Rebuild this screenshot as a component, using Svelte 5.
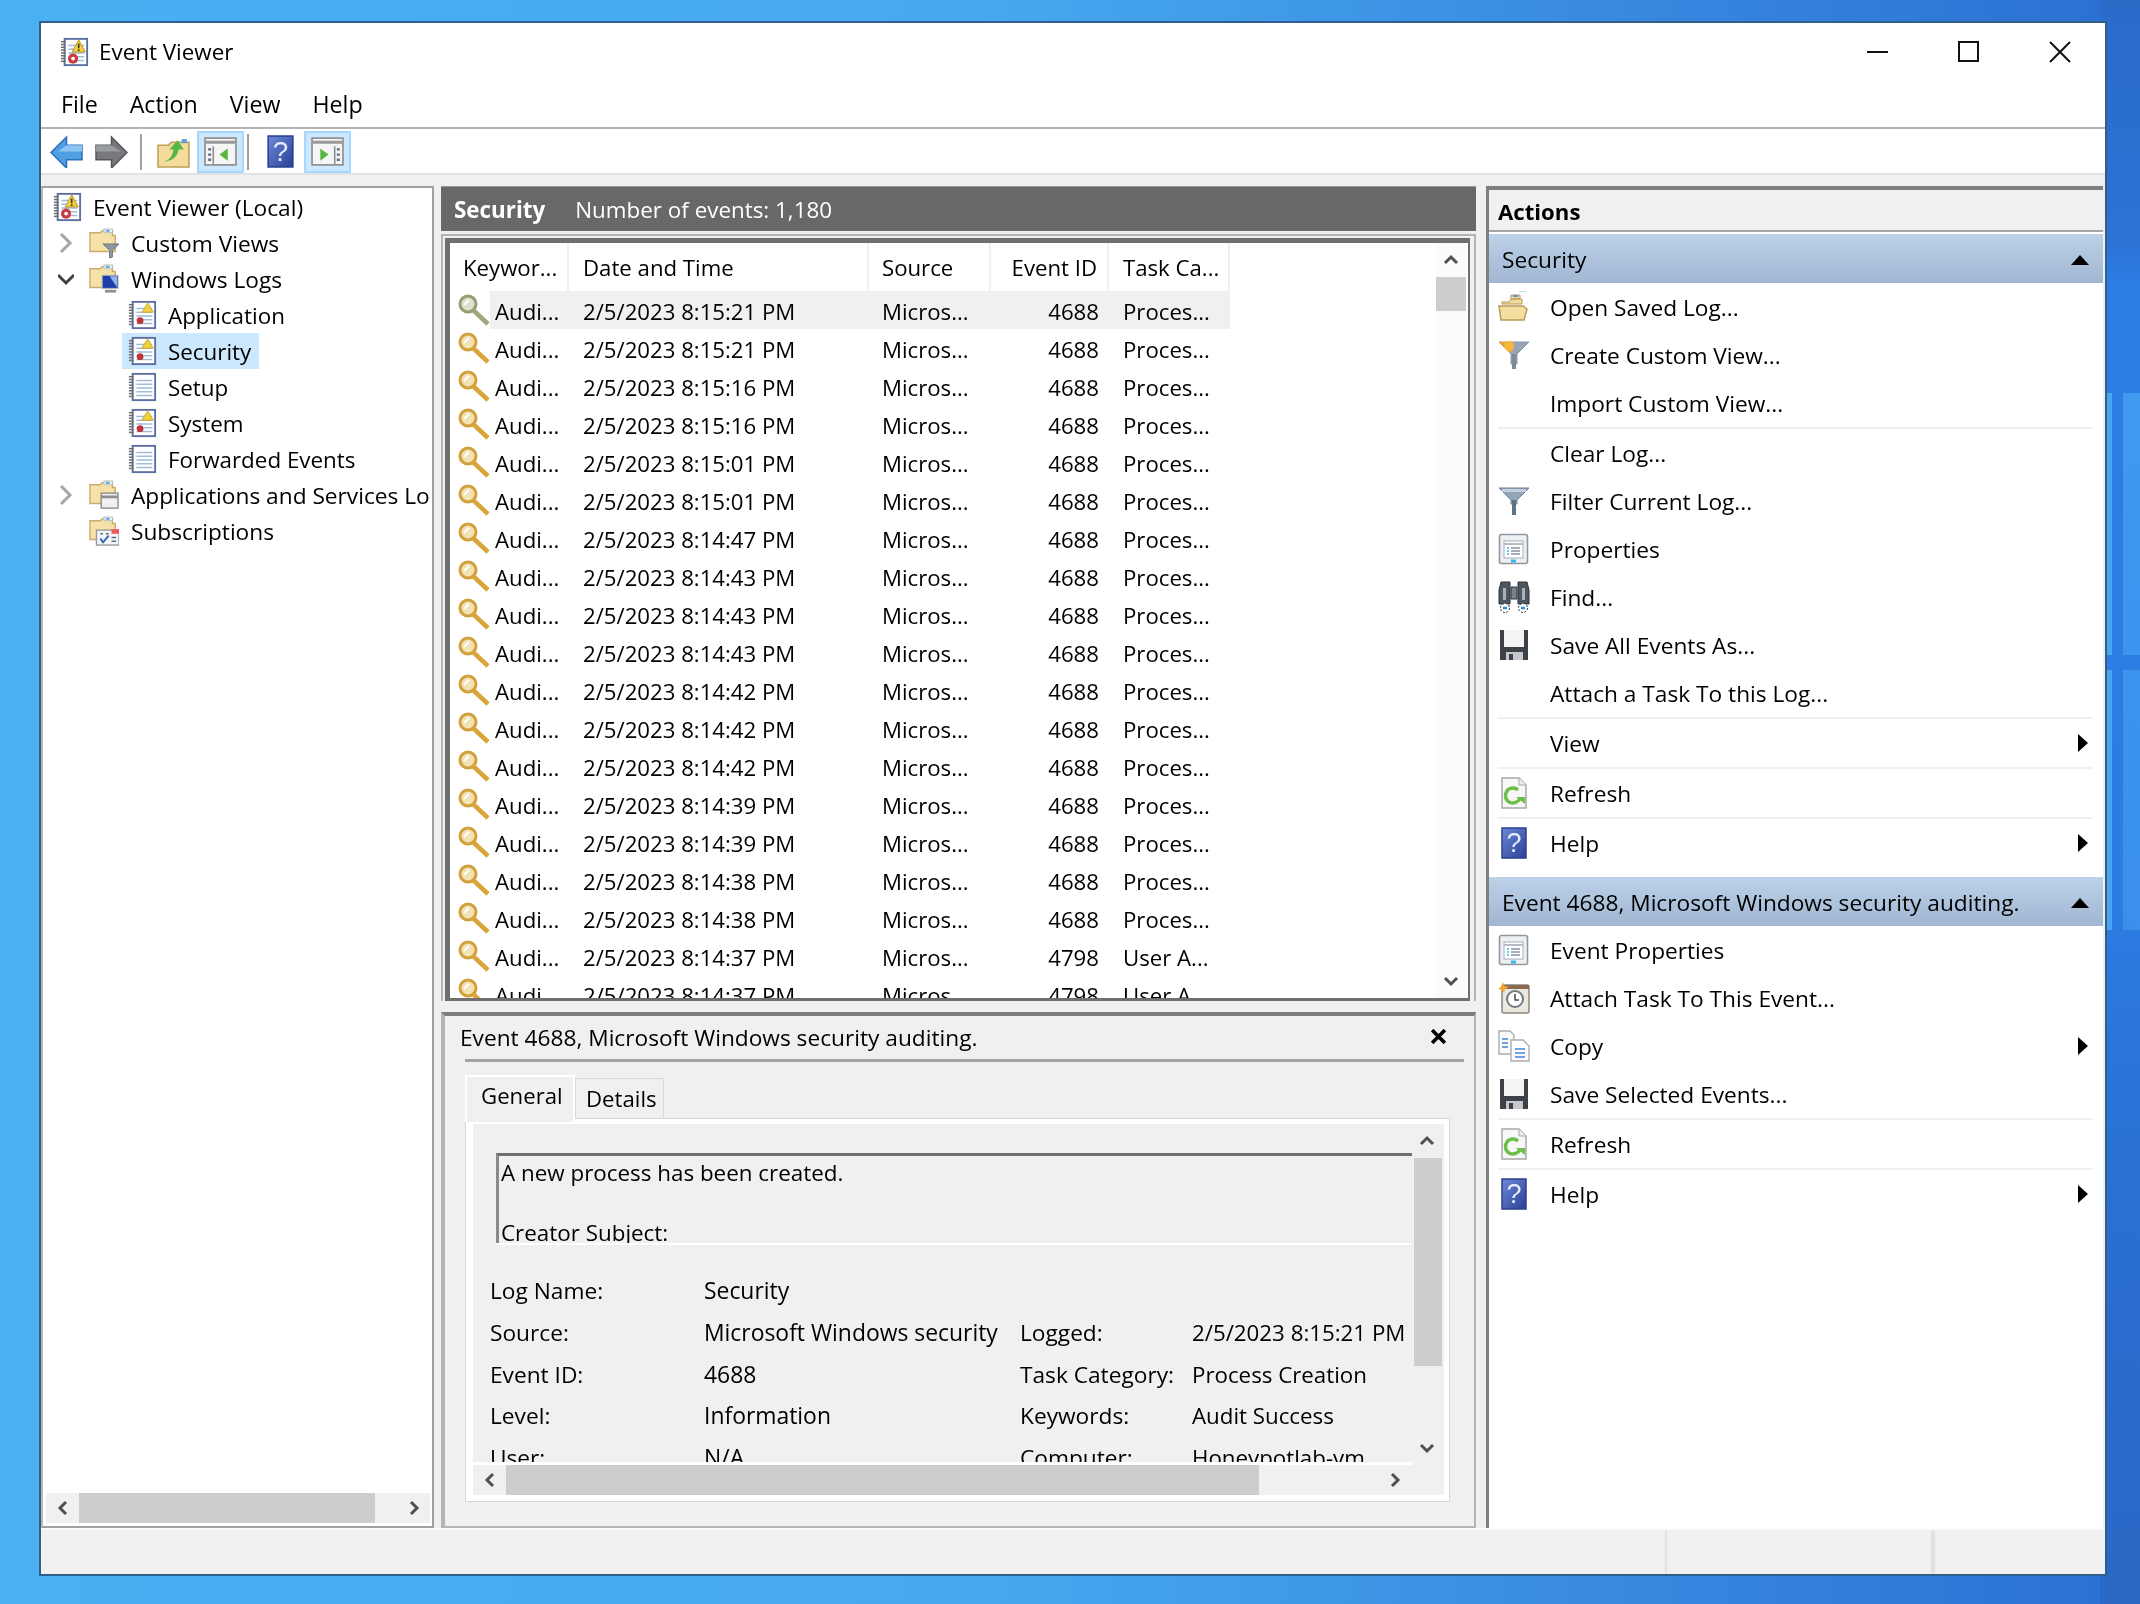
<script>
  // Event Viewer window, security log selected
  const tree = [
    { label: 'Event Viewer (Local)', level: 0, icon: 'logMain' },
    { label: 'Custom Views', level: 1, chev: 'closed', icon: 'folderFilter' },
    { label: 'Windows Logs', level: 1, chev: 'open', icon: 'folderMonitor' },
    { label: 'Application', level: 2, icon: 'logWarn' },
    { label: 'Security', level: 2, icon: 'logWarn', selected: true },
    { label: 'Setup', level: 2, icon: 'logPlain' },
    { label: 'System', level: 2, icon: 'logWarn' },
    { label: 'Forwarded Events', level: 2, icon: 'logPlain' },
    { label: 'Applications and Services Logs', level: 1, chev: 'closed', icon: 'folderWindow' },
    { label: 'Subscriptions', level: 1, icon: 'folderCal' }
  ];

  const times = ['8:15:21', '8:15:21', '8:15:16', '8:15:16', '8:15:01', '8:15:01', '8:14:47', '8:14:43', '8:14:43', '8:14:43', '8:14:42', '8:14:42', '8:14:42', '8:14:39', '8:14:39', '8:14:38', '8:14:38', '8:14:37', '8:14:37'];
  const events = times.map((t, i) => ({
    date: `2/5/2023 ${t} PM`,
    id: i > 16 ? '4798' : '4688',
    task: i > 16 ? 'User A...' : 'Proces...'
  }));

  const securityActions = [
    { label: 'Open Saved Log...', icon: 'openFolder' },
    { label: 'Create Custom View...', icon: 'funnelOrange' },
    { label: 'Import Custom View...', sep: true },
    { label: 'Clear Log...' },
    { label: 'Filter Current Log...', icon: 'funnel' },
    { label: 'Properties', icon: 'props' },
    { label: 'Find...', icon: 'binoculars' },
    { label: 'Save All Events As...', icon: 'floppy' },
    { label: 'Attach a Task To this Log...', sep: true },
    { label: 'View', sub: true, sep: true },
    { label: 'Refresh', icon: 'refresh', sep: true },
    { label: 'Help', icon: 'help', sub: true }
  ];
  const eventActions = [
    { label: 'Event Properties', icon: 'props' },
    { label: 'Attach Task To This Event...', icon: 'clock' },
    { label: 'Copy', icon: 'copy', sub: true },
    { label: 'Save Selected Events...', icon: 'floppy', sep: true },
    { label: 'Refresh', icon: 'refresh', sep: true },
    { label: 'Help', icon: 'help', sub: true }
  ];
  const fields = [
    ['Log Name:', 'Security', '', ''],
    ['Source:', 'Microsoft Windows security', 'Logged:', '2/5/2023 8:15:21 PM'],
    ['Event ID:', '4688', 'Task Category:', 'Process Creation'],
    ['Level:', 'Information', 'Keywords:', 'Audit Success'],
    ['User:', 'N/A', 'Computer:', 'Honeypotlab-vm']
  ];
  const rings = [5, 8, 11, 14, 17, 20, 23, 26];
</script>

{#snippet folderBase()}
  <path d="M1 5h11l2-2h11v5h3v17H1z" fill="#f6e2a8" stroke="#c9ad6c" stroke-width="1.5"/>
  <rect x="16" y="1" width="9" height="4" fill="#eef3f8" stroke="#b9bcc0"/>
  <rect x="18" y="2" width="4" height="2" fill="#5aa0d8"/>
{/snippet}

{#snippet icon(name)}
  <svg class="ico" viewBox="0 0 32 32" aria-hidden="true">
    {#if name.startsWith('log')}
      <rect x="6" y="2" width="24" height="28" fill="#fff" stroke="#5b6fa3" stroke-width="2"/>
      {#each rings as y}
        <path d="M2 {y}h5" stroke="#6f6f6f" stroke-width="1.6"/>
      {/each}
      <path d="M10 9h17M10 13h17M10 17h17M10 21h17M10 25h17" stroke="#9fbcdc" stroke-width="1.6"/>
      {#if name === 'logWarn'}
        <path d="M22 3l6 10H16z" fill="#f2d13c" stroke="#c9a92a"/>
        <circle cx="14" cy="22" r="3.6" fill="#bf3338"/>
      {:else if name === 'logMain'}
        <path d="M21 3l7 13H14z" fill="#f2d13c" stroke="#b2942a"/>
        <path d="M21 7v5M21 13v2" stroke="#4a3c10" stroke-width="1.8"/>
        <circle cx="15" cy="23" r="5.4" fill="#c93c42"/>
        <circle cx="15" cy="23" r="2" fill="#fff"/>
      {/if}
    {:else if name === 'folderFilter'}
      {@render folderBase()}
      <path d="M15 17h17l-7 7v7l-3 1v-8z" fill="#8f98a0" stroke="#6b7278"/>
    {:else if name === 'folderMonitor'}
      {@render folderBase()}
      <rect x="14" y="12" width="17" height="14" fill="#1d3fa8" stroke="#b9bcc0"/>
      <path d="M22 13h8v12z" fill="#8fb6e8"/>
      <path d="M17 29h12" stroke="#8f8f8f" stroke-width="3"/>
    {:else if name === 'folderWindow'}
      {@render folderBase()}
      <rect x="13" y="14" width="18" height="16" fill="#f0f0f0" stroke="#8e8e8e" stroke-width="1.5"/>
      <path d="M13 18h18" stroke="#8e8e8e" stroke-width="3"/>
    {:else if name === 'folderCal'}
      {@render folderBase()}
      <rect x="8" y="15" width="24" height="16" fill="#f4f6fa" stroke="#9a9a9a" stroke-width="1.5"/>
      <path d="M24 14h8v5h-8z" fill="#ee5a5a"/>
      <path d="M12 24l3 4 6-7" fill="none" stroke="#2f62b8" stroke-width="2"/>
      <path d="M12 19h3M18 19h3M24 23h5M24 27h5" stroke="#5d6c86" stroke-width="1.6"/>
    {:else if name === 'key'}
      <circle cx="10" cy="10" r="8" fill="#f3e3b4" stroke="#d2a03c" stroke-width="3"/>
      <path d="M6 11l5-5" stroke="#fff" stroke-width="2"/>
      <path d="M15 16l15 14" stroke="#d9a53a" stroke-width="4.5"/>
    {:else if name === 'keyDim'}
      <circle cx="10" cy="10" r="8" fill="#dfe0cd" stroke="#989d72" stroke-width="3"/>
      <path d="M6 11l5-5" stroke="#fff" stroke-width="2"/>
      <path d="M15 16l15 14" stroke="#a3a67c" stroke-width="4.5"/>
    {:else if name === 'openFolder'}
      <path d="M4 11h7l2-3h11v5H4zM13 4h9v4h-9z" fill="#f1dc9f" stroke="#b99c5a"/>
      <path d="M3 29L1 15h24l4 3-3 11z" fill="#f4dfa0" stroke="#b99c5a" stroke-width="1.5"/>
      <path d="M15 5h5" stroke="#4f9bd8" stroke-width="2"/>
      <path d="M21 0h7" stroke="#63d26a" stroke-width="1"/>
    {:else if name === 'funnelOrange'}
      <path d="M1 3h30L19 15v10l-6 0V15z" fill="#9aa6b4" stroke="#7a8794" stroke-width="0.8"/>
      <path d="M1 3h14v8l-3 3z" fill="#f2a323"/>
      <circle cx="11" cy="7" r="5" fill="#f6b73e"/>
      <path d="M16 15v15" stroke="#7d8a98" stroke-width="4"/>
    {:else if name === 'funnel'}
      <path d="M1 3h30L19 15v4h-6v-4z" fill="#93a6b9" stroke="#6e7f90"/>
      <path d="M4 4h24v3H4z" fill="#c3d1de"/>
      <path d="M16 15v15" stroke="#5f7386" stroke-width="4"/>
    {:else if name === 'props'}
      <rect x="1.5" y="1.5" width="28" height="29" rx="2" fill="#eef1f4" stroke="#8f979f" stroke-width="1.6"/>
      <rect x="6" y="8" width="19" height="17" fill="#fff" stroke="#a6adb4"/>
      <path d="M6 11h19" stroke="#b6bcc2" stroke-width="2"/>
      <path d="M9 15h2M9 18h2M9 21h2" stroke="#39b4ea" stroke-width="1.6"/>
      <path d="M13 15h9M13 18h9M13 21h9" stroke="#8a9299" stroke-width="1.4"/>
      <path d="M13 28h5" stroke="#39b4ea" stroke-width="3"/>
    {:else if name === 'binoculars'}
      <path d="M3 1h9v22H1V9zM20 1h9l2 8v14H20z" fill="#4e5760" stroke="#2d333a"/>
      <path d="M13 6h6v12h-6z" fill="#7a838c" stroke="#2d333a"/>
      <path d="M5 7h3v12H5zM24 7h3v12h-3z" fill="#a8b2bc"/>
      <circle cx="7" cy="27" r="4.5" fill="#fff" stroke="#2d333a" stroke-dasharray="2 1.5"/>
      <circle cx="25" cy="27" r="4.5" fill="#fff" stroke="#2d333a" stroke-dasharray="2 1.5"/>
      <path d="M5 27h4M23 27h4" stroke="#2b8fdc" stroke-width="2.5"/>
    {:else if name === 'floppy'}
      <path d="M2 1h28v30H2z" fill="#3c4147"/>
      <path d="M6 1h20v17H6z" fill="#f4f4f4"/>
      <path d="M8 23h17v8H8z" fill="#c5c7ca"/>
      <path d="M11 25h4v6h-4z" fill="#3c4147"/>
    {:else if name === 'refresh'}
      <path d="M4 1h17l7 7v23H4z" fill="#f8f8f8" stroke="#a8a8a8" stroke-width="1.5"/>
      <path d="M21 1v7h7" fill="#ececec" stroke="#a8a8a8"/>
      <path d="M20 13a7.5 7.5 0 1 0 2 8" fill="none" stroke="#6cc04a" stroke-width="3.5"/>
      <path d="M18 20h9v7z" fill="#6cc04a"/>
    {:else if name === 'help'}
      <defs>
        <linearGradient id="helpFill" x1="0" x2="1" y1="0" y2="1">
          <stop offset="0" stop-color="#6d8ad8"/>
          <stop offset="1" stop-color="#2a3f95"/>
        </linearGradient>
      </defs>
      <rect x="4" y="1" width="24" height="30" fill="url(#helpFill)" stroke="#2a3f8f" stroke-width="1.5"/>
      <text x="16" y="25" class="qmark">?</text>
    {:else if name === 'clock'}
      <rect x="4" y="3" width="27" height="28" rx="2" fill="#ece7df" stroke="#8d8680" stroke-width="1.5"/>
      <path d="M4 3h27v4H4z" fill="#8a6a52"/>
      <circle cx="17" cy="17" r="8" fill="#fff" stroke="#6f7a84" stroke-width="2"/>
      <path d="M17 12v6h4" fill="none" stroke="#4b5258" stroke-width="1.6"/>
      <path d="M5 0l1.5 4L11 5 7 7l-1 4-2-3-4-1 3-2z" fill="#f2a727"/>
    {:else if name === 'copy'}
      <path d="M1 1h11l4 4v19H1z" fill="#fbfbfb" stroke="#a8adb2" stroke-width="1.4"/>
      <path d="M13 10h12l6 6v15H13z" fill="#fff" stroke="#a8adb2" stroke-width="1.4"/>
      <path d="M4 9h6M4 13h6M4 17h6" stroke="#3c86d0" stroke-width="1.6"/>
      <path d="M17 19h10M17 23h10M17 27h10" stroke="#3c86d0" stroke-width="1.6"/>
    {:else if name === 'back'}
      <path d="M1 17L16 2v8h15v14H16v8z" fill="#4f9fe4" stroke="#2d70b8" stroke-width="1.5"/>
      <path d="M16 10h15v6H8z" fill="#8cc5f2"/>
    {:else if name === 'forward'}
      <path d="M31 17L16 2v8H1v14h15v8z" fill="#77797c" stroke="#55575a" stroke-width="1.5"/>
      <path d="M16 10H1v6h24z" fill="#9a9c9f"/>
    {:else if name === 'upFolder'}
      <path d="M1 10h10l3-3h17v24H1z" fill="#f4dc9a" stroke="#bd9f58" stroke-width="1.5"/>
      <path d="M6 26c7-2 9-6 10-12h-4l8-9 6 9h-5c-1 7-6 11-15 12z" fill="#58b548"/>
      <path d="M24 4h5v4h-5z" fill="#5aa0d8"/>
    {:else if name === 'paneLeft' || name === 'paneRight'}
      <rect x="1" y="3" width="30" height="26" fill="#f5f5f5" stroke="#8d8d8d" stroke-width="1.6"/>
      <path d="M1 7h30" stroke="#9a9a9a" stroke-width="3"/>
      {#if name === 'paneLeft'}
        <path d="M9 11v17" stroke="#8d8d8d" stroke-width="1.5"/>
        <path d="M4 14h3M4 19h3M4 24h3" stroke="#5f6f88" stroke-width="2.2"/>
        <path d="M23 13v12l-8-6z" fill="#55b53f"/>
      {:else}
        <path d="M23 11v17" stroke="#8d8d8d" stroke-width="1.5"/>
        <path d="M25 14h3M25 19h3M25 24h3" stroke="#5f6f88" stroke-width="2.2"/>
        <path d="M9 13v12l8-6z" fill="#55b53f"/>
      {/if}
    {/if}
  </svg>
{/snippet}

{#snippet arrow(dir)}
  <svg class="arrow" viewBox="0 0 16 16" aria-hidden="true">
    {#if dir === 'up'}<path d="M2 11l6-6 6 6"/>
    {:else if dir === 'down'}<path d="M2 5l6 6 6-6"/>
    {:else if dir === 'left'}<path d="M11 2L5 8l6 6"/>
    {:else}<path d="M5 2l6 6-6 6"/>{/if}
  </svg>
{/snippet}

{#snippet actionList(items)}
  {#each items as item}
    <div class="action">
      <span class="action-ico">{#if item.icon}{@render icon(item.icon)}{/if}</span>
      <span class="action-label">{item.label}</span>
      {#if item.sub}<span class="sub-tri"></span>{/if}
    </div>
    {#if item.sep}<div class="action-sep"></div>{/if}
  {/each}
{/snippet}

<div class="desktop">
  <div class="window">
    <div class="titlebar">
      <span class="title-ico">{@render icon('logMain')}</span>
      <span class="title">Event Viewer</span>
      <div class="controls">
        <span class="ctl"><svg viewBox="0 0 22 22"><path d="M0 11h21"/></svg></span>
        <span class="ctl"><svg viewBox="0 0 22 22"><rect x="1" y="1" width="19" height="19"/></svg></span>
        <span class="ctl"><svg viewBox="0 0 22 22"><path d="M1 1l20 20M21 1L1 21"/></svg></span>
      </div>
    </div>

    <div class="menubar">
      <span>File</span><span>Action</span><span>View</span><span>Help</span>
    </div>

    <div class="toolbar">
      <span class="tool back">{@render icon('back')}</span>
      <span class="tool back second">{@render icon('forward')}</span>
      <span class="tool-sep"></span>
      <span class="tool folder">{@render icon('upFolder')}</span>
      <span class="tool on">{@render icon('paneLeft')}</span>
      <span class="tool-sep second"></span>
      <span class="tool help">{@render icon('help')}</span>
      <span class="tool on">{@render icon('paneRight')}</span>
    </div>

    <div class="main">
      <div class="tree-pane">
        <div class="tree">
          {#each tree as node}
            <div class="node lvl{node.level}">
              <span class="chev">
                {#if node.chev === 'closed'}
                  <svg viewBox="0 0 16 24"><path class="c-closed" d="M3 3l9 9-9 9"/></svg>
                {:else if node.chev === 'open'}
                  <svg viewBox="0 0 16 24"><path class="c-open" d="M0 8l8 8 8-8"/></svg>
                {/if}
              </span>
              <span class="node-inner" class:selected={node.selected}>
                <span class="node-ico">{@render icon(node.icon)}</span>
                <span class="node-label">{node.label}</span>
              </span>
            </div>
          {/each}
        </div>
        <div class="hscroll">
          <span class="sb-btn">{@render arrow('left')}</span>
          <span class="thumb tree-thumb"></span>
          <span class="sb-btn end">{@render arrow('right')}</span>
        </div>
      </div>

      <div class="center">
        <div class="log-head">
          <b>Security</b><span>Number of events: 1,180</span>
        </div>

        <div class="list-frame">
          <div class="list">
            <div class="list-table">
              <div class="row head">
                <span class="c kw">Keywor...</span>
                <span class="c dt">Date and Time</span>
                <span class="c src">Source</span>
                <span class="c eid">Event ID</span>
                <span class="c task">Task Ca...</span>
              </div>
              {#each events as ev, i}
                <div class="row" class:current={i === 0}>
                  <span class="c kw"><span class="key">{@render icon(i === 0 ? 'keyDim' : 'key')}</span><span class="kw-text">Audi...</span></span>
                  <span class="c dt">{ev.date}</span>
                  <span class="c src">Micros...</span>
                  <span class="c eid">{ev.id}</span>
                  <span class="c task">{ev.task}</span>
                </div>
              {/each}
            </div>
            <div class="vscroll">
              <span class="sb-btn v">{@render arrow('up')}</span>
              <span class="vtrack"><span class="thumb list-thumb"></span></span>
              <span class="sb-btn v">{@render arrow('down')}</span>
            </div>
          </div>
        </div>

        <div class="preview">
          <div class="prev-head">
            <span>Event 4688, Microsoft Windows security auditing.</span>
            <svg class="prev-x" viewBox="0 0 14 14"><path d="M1 1l12 12M13 1L1 13"/></svg>
          </div>
          <div class="tabs">
            <span class="tab active">General</span>
            <span class="tab">Details</span>
          </div>
          <div class="tab-body">
            <div class="tab-grid">
              <div class="content">
                <div class="msg">
                  <p>A new process has been created.</p>
                  <p>&nbsp;</p>
                  <p>Creator Subject:</p>
                </div>
                <div class="fields">
                  {#each fields as f}
                    {#each f as cell}<span>{cell}</span>{/each}
                  {/each}
                </div>
              </div>
              <div class="vscroll small">
                <span class="sb-btn v">{@render arrow('up')}</span>
                <span class="vtrack"><span class="thumb prev-thumb"></span></span>
                <span class="sb-btn v">{@render arrow('down')}</span>
              </div>
              <div class="hscroll inner">
                <span class="sb-btn">{@render arrow('left')}</span>
                <span class="thumb inner-thumb"></span>
                <span class="sb-btn end">{@render arrow('right')}</span>
              </div>
            </div>
          </div>
        </div>
      </div>

      <div class="actions">
        <div class="actions-title">Actions</div>
        <div class="section"><span>Security</span><i class="up-tri"></i></div>
        {@render actionList(securityActions)}
        <div class="section second"><span>Event 4688, Microsoft Windows security auditing.</span><i class="up-tri"></i></div>
        {@render actionList(eventActions)}
      </div>
    </div>

    <div class="status">
      <span class="s1"></span><span class="s2"></span><span></span>
    </div>
  </div>
</div>

<style>
  :global(body) {
    margin: 0;
  }
  .desktop {
    width: 2140px;
    height: 1604px;
    box-sizing: border-box;
    padding: 21px 33px 28px 39px;
    /* wallpaper: light panes of the logo showing at the right edge */
    background:
      linear-gradient(#409af0, #3c94ee) 2123px 393px / 17px 262px no-repeat,
      linear-gradient(#3c94ee, #3a90ea) 2123px 670px / 17px 260px no-repeat,
      linear-gradient(#4aa4f0, #4aa4f0) 2107px 393px / 5px 262px no-repeat,
      linear-gradient(#4aa4f0, #4aa4f0) 2107px 670px / 5px 260px no-repeat,
      linear-gradient(#2a6cc8 0, #2c72d4 15%, #2c7ee6 18%, #2c7ce2 57%, #2b74d8 66%, #2a6fd2 75%, #2a68c4 100%) 2100px 0 / 40px 1604px no-repeat,
      linear-gradient(90deg, #4ab0f2 0%, #47a9ef 45%, #3a8de2 72%, #2a6fd2 100%);
    font-family: "Open Sans", sans-serif;
    font-size: 22.7px;
    color: #000;
    overflow: hidden;
  }
  .window {
    height: 100%;
    box-sizing: border-box;
    border: 2px solid #2f5f8c;
    background: #f0f0f0;
    display: flex;
    flex-direction: column;
    /* the reference is an upscaled capture, edges are soft */
    filter: blur(0.5px);
  }
  .ico {
    display: block;
    width: 100%;
    height: 100%;
  }
  .qmark {
    font-family: "Liberation Sans", sans-serif;
    font-size: 27px;
    fill: #e8ecfa;
    text-anchor: middle;
  }

  /* title and menu */
  .titlebar {
    height: 57px;
    flex: none;
    background: #fff;
    display: flex;
    align-items: center;
    padding-left: 18px;
    font-size: 22.4px;
  }
  .title-ico {
    width: 30px;
    height: 32px;
    margin-right: 10px;
  }
  .controls {
    margin-left: auto;
    display: flex;
  }
  .ctl {
    width: 91px;
    display: flex;
    justify-content: center;
  }
  .ctl svg {
    width: 22px;
    height: 22px;
    fill: none;
    stroke: #111;
    stroke-width: 2;
  }
  .menubar {
    height: 49px;
    flex: none;
    background: #fff;
    display: flex;
    align-items: center;
    gap: 32px;
    padding: 0 0 0 20px;
    box-sizing: border-box;
    border-bottom: 2px solid #b4b4b4;
    font-size: 23.2px;
  }
  .toolbar {
    height: 46px;
    flex: none;
    box-sizing: border-box;
    background: #fff;
    border-bottom: 2px solid #e2e2e2;
    display: flex;
    align-items: center;
    padding: 1px 0 0 3px;
  }
  .tool {
    height: 42px;
    box-sizing: border-box;
    display: flex;
    align-items: center;
    justify-content: center;
  }
  .tool :global(svg) {
    width: 33px;
    height: 33px;
  }
  .back {
    width: 44px;
  }
  .back.second {
    margin-left: 1px;
  }
  .folder {
    width: 47px;
    margin-left: 8px;
  }
  .help {
    width: 47px;
    margin-left: 8px;
  }
  .on {
    width: 47px;
    background: #cce8ff;
    border: 2px solid #a6d8ff;
  }
  .tool-sep {
    width: 2px;
    height: 36px;
    margin: 0 0 0 7px;
    background: #a0a0a0;
  }
  .tool-sep.second {
    margin: 0 0 0 3px;
  }

  .main {
    flex: 1;
    min-height: 0;
    display: flex;
    padding-top: 11px;
  }

  /* left tree */
  .tree-pane {
    width: 393px;
    flex: none;
    box-sizing: border-box;
    background: #fff;
    border: 2px solid #a0a0a0;
    border-left-color: #b8b8b8;
    display: flex;
    flex-direction: column;
    padding: 0 2px 3px 3px;
  }
  .tree {
    flex: 1;
    overflow: hidden;
    padding-top: 1px;
  }
  .node {
    height: 36px;
    display: flex;
    align-items: center;
    white-space: nowrap;
  }
  .node.lvl0 {
    padding-left: 6px;
  }
  .node.lvl0 .chev, .node.lvl2 .chev {
    display: none;
  }
  .node.lvl1 {
    padding-left: 12px;
  }
  .node.lvl2 {
    padding-left: 76px;
    font-size: 22.4px;
  }
  .chev {
    width: 31px;
    height: 24px;
    flex: none;
  }
  .chev svg {
    width: 16px;
    height: 24px;
    display: block;
    fill: none;
    stroke-width: 3;
  }
  .c-closed {
    stroke: #a6a6a6;
  }
  .c-open {
    stroke: #404040;
  }
  .node-inner {
    display: flex;
    align-items: center;
    height: 36px;
    padding-right: 8px;
  }
  .lvl2 .node-inner {
    padding-left: 5px;
  }
  .node-inner.selected {
    background: #cce8ff;
  }
  .node-ico {
    width: 30px;
    height: 32px;
    flex: none;
    margin-right: 11px;
  }
  .lvl1 .node-ico {
    margin-right: 12px;
  }
  .hscroll {
    height: 30px;
    flex: none;
    background: #f0f0f0;
    display: flex;
    align-items: center;
  }
  .sb-btn {
    display: flex;
    align-items: center;
    justify-content: center;
    width: 33px;
    height: 30px;
    flex: none;
  }
  .sb-btn.end {
    margin-left: auto;
  }
  .arrow {
    width: 16px;
    height: 16px;
    fill: none;
    stroke: #505050;
    stroke-width: 3;
  }
  .thumb {
    display: block;
    background: #cdcdcd;
  }
  .tree-thumb {
    width: 296px;
    height: 30px;
  }

  /* center column */
  .center {
    width: 1035px;
    flex: none;
    margin-left: 7px;
    display: flex;
    flex-direction: column;
  }
  .log-head {
    height: 45px;
    flex: none;
    background: #686868;
    color: #fff;
    display: flex;
    align-items: center;
    padding-left: 13px;
    gap: 30px;
    border-top: 1px solid #9a9a9a;
    box-sizing: border-box;
    font-size: 22.4px;
  }
  .log-head b {
    font-weight: 700;
  }
  .list-frame {
    height: 767px;
    flex: none;
    margin-top: 3px;
    box-sizing: border-box;
    border: 2px solid #b4b4b4;
    border-bottom: none;
    padding: 2px 4px 0 2px;
  }
  .list {
    height: 100%;
    box-sizing: border-box;
    background: #fff;
    border: solid #6f6f6f;
    border-width: 5px 2px 3px 5px;
    display: flex;
    font-size: 22.2px;
  }
  .list-table {
    flex: 1;
    overflow: hidden;
    min-width: 0;
  }
  .row {
    height: 38px;
    display: flex;
    align-items: center;
    width: 780px;
    white-space: nowrap;
  }
  .row:not(.head) .dt, .row:not(.head) .src, .row:not(.head) .eid, .row:not(.head) .task, .kw-text {
    padding-top: 2px;
    box-sizing: border-box;
  }
  .row.head {
    height: 48px;
  }
  .row.head .c {
    height: 100%;
    border-right: 2px solid #f0f0f0;
  }
  .c {
    display: flex;
    align-items: center;
    box-sizing: border-box;
    height: 100%;
    flex: none;
  }
  .kw {
    width: 119px;
    padding-left: 13px;
  }
  .row:not(.head) .kw {
    padding-left: 0;
  }
  .dt {
    width: 300px;
    padding-left: 14px;
  }
  .src {
    width: 122px;
    padding-left: 13px;
  }
  .eid {
    width: 118px;
    justify-content: flex-end;
    padding-right: 10px;
  }
  .task {
    width: 121px;
    padding-left: 14px;
  }
  .row.current .c:not(.kw), .row.current .kw-text {
    background: #f0f0f0;
  }
  .key {
    width: 32px;
    height: 32px;
    margin-left: 8px;
    flex: none;
  }
  .kw-text {
    height: 100%;
    display: flex;
    align-items: center;
    flex: 1;
    padding-left: 5px;
  }
  .vscroll {
    width: 30px;
    flex: none;
    margin-right: 2px;
    background: #fbfbfb;
    display: flex;
    flex-direction: column;
  }
  .sb-btn.v {
    width: 100%;
    height: 34px;
  }
  .vtrack {
    flex: 1;
  }
  .list-thumb {
    height: 34px;
  }

  /* details pane */
  .preview {
    flex: 1;
    min-height: 0;
    margin-top: 11px;
    border: solid #b4b4b4;
    border-width: 4px 2px 2px 4px;
    border-top-color: #7d7d7d;
    display: flex;
    flex-direction: column;
  }
  .prev-head {
    height: 43px;
    flex: none;
    margin: 0 10px;
    display: flex;
    align-items: center;
    justify-content: space-between;
    padding: 0 18px 0 5px;
  }
  .prev-x {
    width: 15px;
    height: 15px;
    fill: none;
    stroke: #000;
    stroke-width: 3.4;
    margin-bottom: 3px;
  }
  .tabs {
    flex: none;
    height: 59px;
    box-sizing: border-box;
    margin-left: 20px;
    margin-right: 10px;
    padding-top: 13px;
    border-top: 3px solid #a3a3a3;
    display: flex;
    align-items: flex-end;
    font-size: 22.2px;
  }
  .tab {
    height: 40px;
    padding: 0 10px;
    width: 89px;
    box-sizing: border-box;
    display: flex;
    align-items: center;
    border: 1px solid #d9d9d9;
    border-bottom: none;
  }
  .tab.active {
    width: 110px;
    height: 47px;
    margin-bottom: -4px;
    padding: 0 0 8px 14px;
    background: #f0f0f0;
    border: 2px solid #fff;
    border-bottom: none;
    z-index: 1;
  }
  .tab-body {
    height: 384px;
    flex: none;
    margin-left: 20px;
    width: 985px;
    box-sizing: border-box;
    background: #fff;
    border: 1px solid #d9d9d9;
    padding: 5px 5px 6px 7px;
  }
  .tab-grid {
    height: 100%;
    background: #f0f0f0;
    display: grid;
    grid-template-columns: 1fr 32px;
    grid-template-rows: 1fr 30px;
  }
  .content {
    overflow: hidden;
    border-bottom: 3px solid #fff;
    padding-top: 29px;
  }
  .msg {
    margin-left: 23px;
    height: 90px;
    box-sizing: border-box;
    border-top: 3px solid #6f6f6f;
    border-left: 3px solid #8a8a8a;
    padding: 2px 0 0 2px;
    overflow: hidden;
    box-shadow: 0 2px 0 #fff;
    font-size: 22.4px;
  }
  .msg p {
    margin: 0;
    height: 30px;
    line-height: 30px;
    white-space: nowrap;
  }
  .fields {
    margin-top: 27px;
    padding-left: 17px;
    display: grid;
    grid-template-columns: 214px 316px 172px auto;
    grid-auto-rows: 41.7px;
    align-items: center;
    white-space: nowrap;
  }
  .fields span:nth-child(4n + 2) {
    font-size: 22.9px;
  }
  .fields span:nth-child(4n) {
    font-size: 22.3px;
  }
  .small {
    margin: 0;
    background: #f0f0f0;
  }
  .prev-thumb {
    height: 208px;
    margin-left: 2px;
  }
  .inner {
    grid-column: 1 / 3;
    background: #f0f0f0;
  }
  .inner-thumb {
    width: 753px;
    height: 30px;
  }
  .inner .end {
    margin: 0 33px 0 auto;
  }

  /* right column */
  .actions {
    width: 617px;
    flex: none;
    margin-left: 10px;
    margin-right: 4px;
    box-sizing: border-box;
    background: #fff;
    border-left: 3px solid #7f7f7f;
    border-top: 4px solid #7f7f7f;
  }
  .actions-title {
    height: 42px;
    box-sizing: border-box;
    background: #f0f0f0;
    border-bottom: 2px solid #a6a6a6;
    display: flex;
    align-items: center;
    padding: 3px 0 0 9px;
    font-weight: 700;
    font-size: 22.2px;
  }
  .section {
    height: 49px;
    box-sizing: border-box;
    margin-top: 2px;
    background: linear-gradient(#bcd2e8, #a0b6d2);
    display: flex;
    align-items: center;
    justify-content: space-between;
    padding: 2px 14px 0 13px;
  }
  .section.second {
    margin-top: 10px;
  }
  .up-tri {
    width: 0;
    height: 0;
    border-left: 9px solid transparent;
    border-right: 9px solid transparent;
    border-bottom: 10px solid #000;
  }
  .action {
    height: 48px;
    display: flex;
    align-items: center;
    padding: 0 15px 0 9px;
  }
  .action-ico {
    width: 32px;
    height: 32px;
    flex: none;
    margin-right: 20px;
  }
  .sub-tri {
    margin-left: auto;
    width: 0;
    height: 0;
    border-top: 9px solid transparent;
    border-bottom: 9px solid transparent;
    border-left: 10px solid #000;
  }
  .action-sep {
    height: 2px;
    margin: 0 10px 0 9px;
    background: #f0f0f0;
  }

  .status {
    height: 46px;
    flex: none;
    display: flex;
    box-sizing: border-box;
    border-top: 2px solid #fbfbfb;
  }
  .status span {
    border-right: 2px solid #e2e2e2;
  }
  .s1 {
    width: 1624px;
  }
  .s2 {
    width: 264px;
  }
</style>
